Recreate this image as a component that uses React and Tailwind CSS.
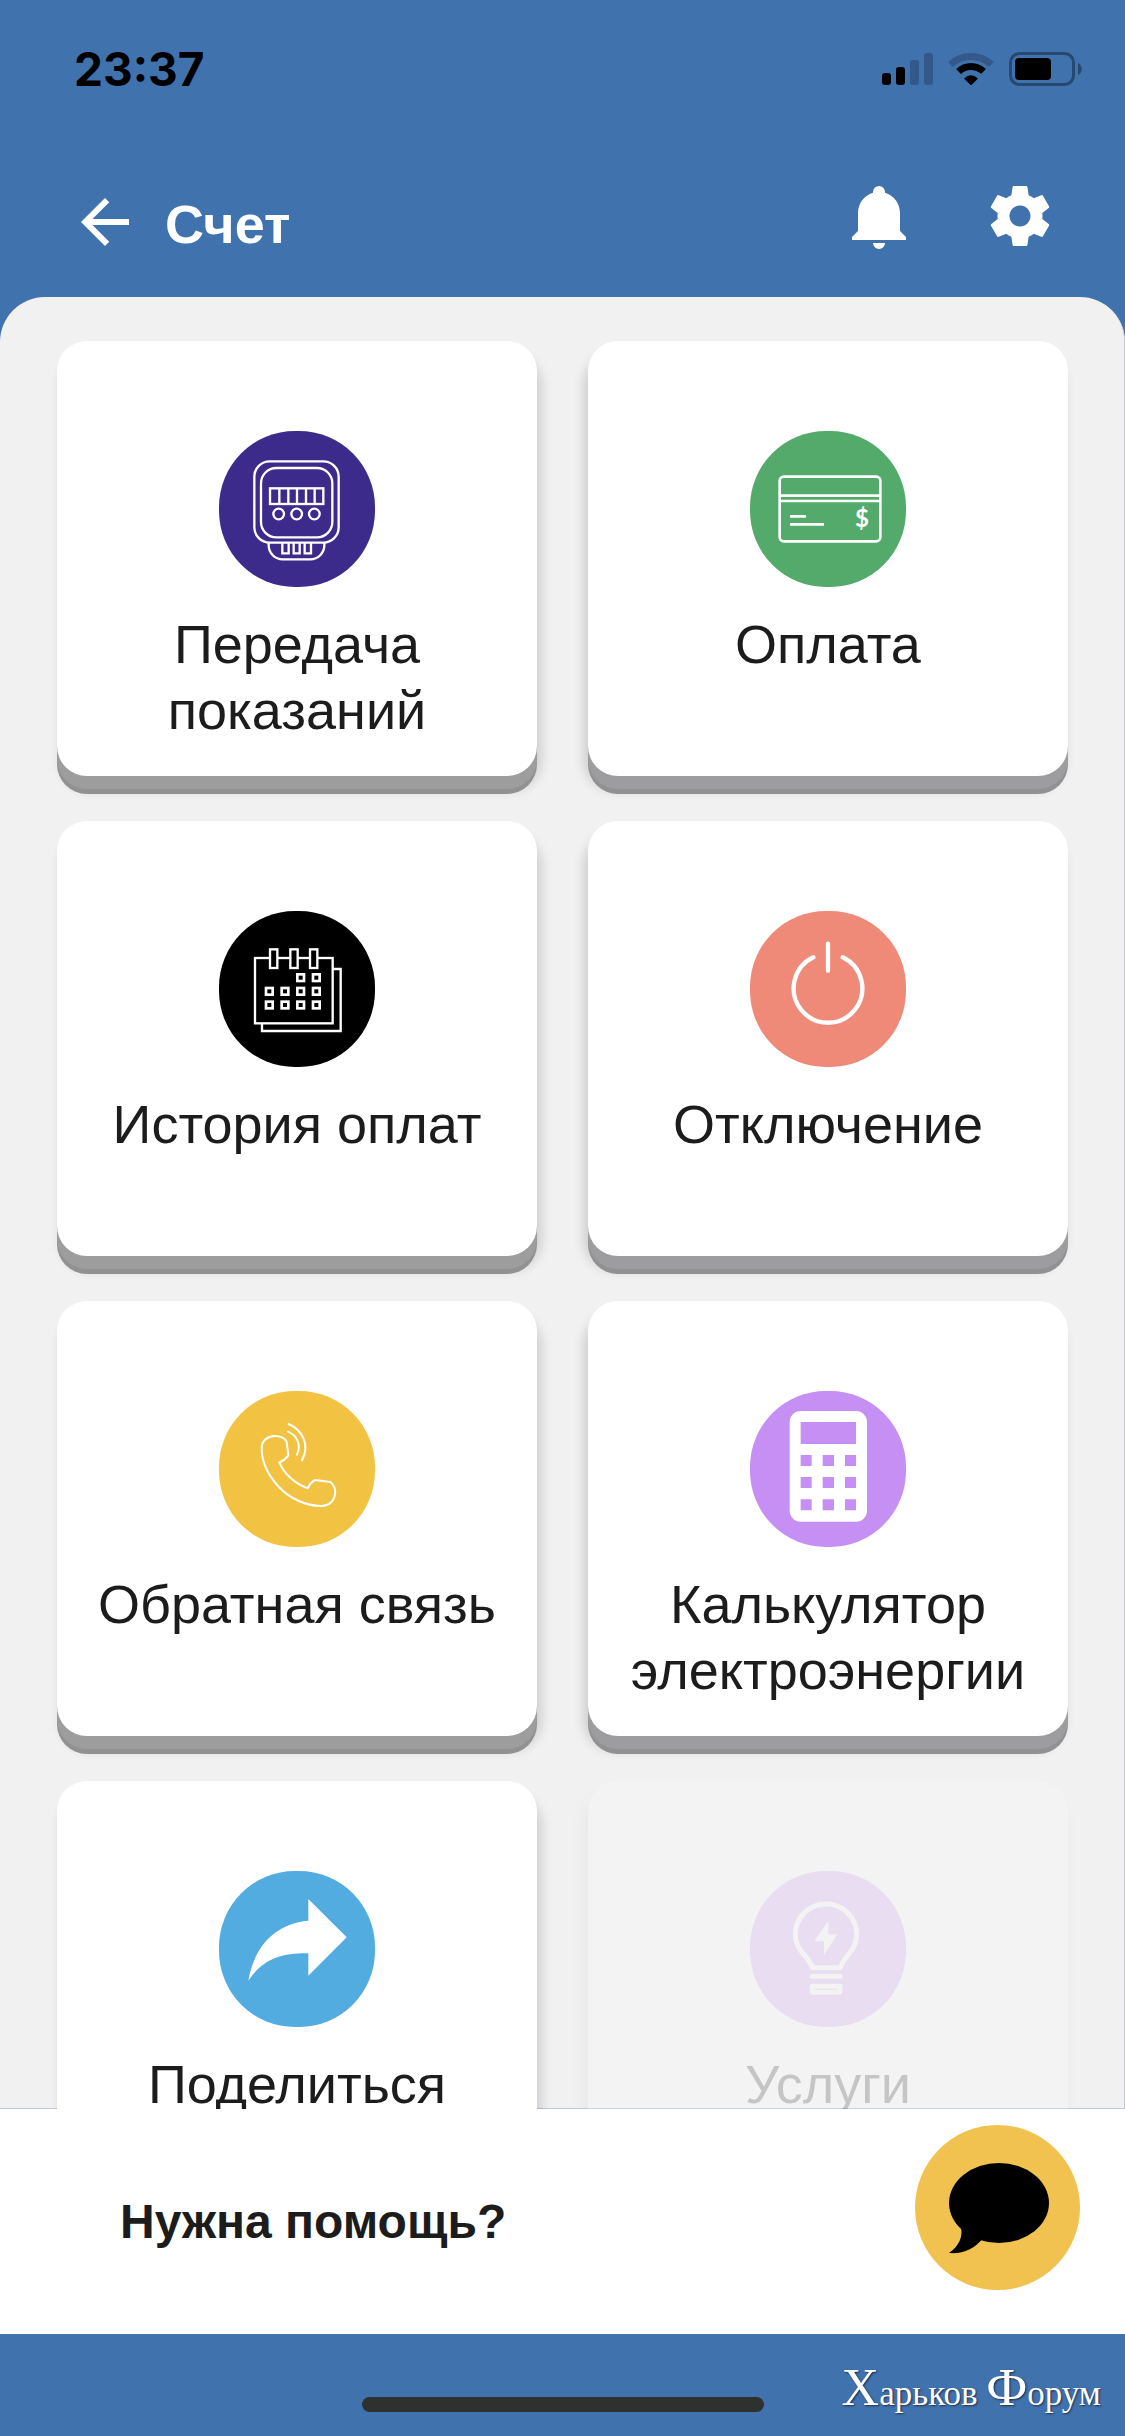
import React from "react";

function MeterIcon() {
  return (
    <svg viewBox="0 0 468 468" className="size-full" fill="none" stroke="white" strokeWidth="7" aria-hidden="true">
      <rect x="106" y="91" width="253" height="244" rx="46" />
      <rect x="126" y="111" width="214" height="208" rx="46" />
      <rect x="153" y="172" width="160" height="47" />
      <path d="M181 172v47M208 172v47M234 172v47M261 172v47M287 172v47" />
      <circle cx="179" cy="249" r="16" />
      <circle cx="233" cy="249" r="16" />
      <circle cx="286" cy="249" r="16" />
      <path d="M149 335v8a42 42 0 0 0 42 42h83a42 42 0 0 0 42-42v-8" />
      <path d="M190 335v32h19v-32M224 335v32h18v-32M257 335v32h19v-32" />
    </svg>
  );
}

function CardIcon() {
  return (
    <svg viewBox="0 0 468 468" className="size-full" fill="none" stroke="white" strokeWidth="8" aria-hidden="true">
      <rect x="89" y="137" width="302" height="194" rx="12" />
      <path d="M89 194h302M89 210h302M120 256h48M120 280h102" />
      <text x="336" y="288" textAnchor="middle" fill="white" stroke="none" fontSize="72" fontWeight="700" fontFamily="Lato, sans-serif">
        $
      </text>
    </svg>
  );
}

const days = [
  [245, 200], [292, 200],
  [151, 241], [198, 241], [245, 241], [292, 241],
  [151, 282], [198, 282], [245, 282], [292, 282],
];

function CalendarIcon() {
  return (
    <svg viewBox="0 0 468 468" className="size-full" fill="none" stroke="white" strokeWidth="7" aria-hidden="true">
      <path d="M341 174h24v186H129v-23" />
      <rect x="108" y="141" width="233" height="196" />
      <g fill="black">
        <rect x="153" y="115" width="22" height="56" />
        <rect x="214" y="115" width="22" height="56" />
        <rect x="273" y="115" width="22" height="56" />
      </g>
      {days.map(([x, y]) => (
        <rect key={`${x}-${y}`} x={x - 10} y={y - 10} width="20" height="20" strokeWidth="8" />
      ))}
    </svg>
  );
}

function PowerIcon() {
  return (
    <svg viewBox="0 0 468 468" className="size-full" fill="none" stroke="white" strokeWidth="13" strokeLinecap="round" aria-hidden="true">
      <path d="M234 98v81M190 139a103 103 0 1 0 88 0" />
    </svg>
  );
}

function PhoneIcon() {
  return (
    <svg viewBox="57 63 468 468" className="size-full" fill="none" stroke="white" strokeWidth="6" strokeLinecap="round" strokeLinejoin="round" aria-hidden="true">
      <path d="M185 236C184 214 200 200 222 198C240 197 256 204 260 216L265 256C258 266 250 272 238 277C252 312 286 342 323 355C328 344 334 335 346 330L391 336C402 345 407 360 405 373C401 395 386 407 364 408C318 408 268 386 234 348C204 314 185 274 185 236Z" />
      <path d="M266 162C305 180 332 222 306 271M264 185C288 195 306 222 291 254" />
    </svg>
  );
}

function CalculatorIcon() {
  return (
    <svg viewBox="60 63 468 468" className="size-full" fill="white" aria-hidden="true">
      <path
        fillRule="evenodd"
        d="M212 123H378a33 33 0 0 1 33 33V422a33 33 0 0 1-33 33H212a33 33 0 0 1-33-33V156a33 33 0 0 1 33-33ZM212 156v66h166v-66ZM212 255v33h33v-33ZM278 255v33h34v-33ZM345 255v33h33v-33ZM212 321v33h33v-33ZM278 321v33h34v-33ZM345 321v33h33v-33ZM212 388v33h33v-33ZM278 388v33h34v-33ZM345 388v33h33v-33Z"
      />
    </svg>
  );
}

function ShareIcon() {
  return (
    <svg viewBox="0 0 468 468" className="size-full" fill="white" aria-hidden="true">
      <path d="M268 84L383 199L268 314V247C186 246 132 264 88 329C104 234 162 158 268 149Z" />
    </svg>
  );
}

function BulbIcon() {
  return (
    <svg viewBox="0 0 468 468" className="size-full" fill="none" stroke="white" strokeWidth="15" strokeLinecap="round" strokeLinejoin="round" aria-hidden="true">
      <path d="M187 290C176 254 136 240 136 190A92 91 0 0 1 320 190C320 240 282 254 271 290Z" />
      <path d="M187 316h83M187 346h83v14q0 4-4 4h-75q-4 0-4-4Z" />
      <path d="M235 150V190H262L222 252V211H192Z" fill="white" stroke="none" />
    </svg>
  );
}

const tiles = [
  { label: "Передача показаний", color: "bg-[#3c2b8b]", Icon: MeterIcon },
  { label: "Оплата", color: "bg-[#53aa6a]", Icon: CardIcon },
  { label: "История оплат", color: "bg-black", Icon: CalendarIcon },
  { label: "Отключение", color: "bg-[#ef8a78]", Icon: PowerIcon },
  { label: "Обратная связь", color: "bg-[#f2c343]", Icon: PhoneIcon },
  { label: "Калькулятор электроэнергии", color: "bg-[#c58ff3]", Icon: CalculatorIcon },
  { label: "Поделиться", color: "bg-[#52ace0]", Icon: ShareIcon },
  { label: "Услуги", color: "bg-[#c58ff3]", Icon: BulbIcon, disabled: true },
];

function Tile({ label, color, Icon, disabled }) {
  return (
    <button
      type="button"
      disabled={disabled}
      className="flex min-h-[435px] flex-col items-center gap-6 rounded-[30px] bg-white px-4 pt-[90px] pb-[33px] odd:shadow-[0_13px_0_#9d9d9d,0_18px_0_#919191,4px_14px_12px_rgba(0,0,0,0.16)] even:shadow-[0_13px_0_#9d9d9f,0_18px_0_#919193,-4px_14px_12px_rgba(0,0,0,0.16)] disabled:opacity-20"
    >
      <span className={`size-[156px] shrink-0 rounded-[76px] ${color}`}>
        <Icon />
      </span>
      <span className="text-[54px] leading-[66px] text-[#1c1c1c]">{label}</span>
    </button>
  );
}

function StatusBar() {
  return (
    <div className="flex h-[132px] items-start justify-between pt-[42px] pr-[43px] pl-[74px]">
      <span className="font-[Inter,sans-serif] text-[46px] leading-[54px] font-bold text-black">23:37</span>
      <svg width="200" height="34" viewBox="0 0 200 34" className="mt-[10px]" aria-hidden="true">
        <rect x="0" y="21" width="9" height="12" rx="3" />
        <rect x="14" y="15" width="9" height="18" rx="3" />
        <rect x="28" y="8" width="9" height="25" rx="3" fill="#33598a" />
        <rect x="42" y="1" width="9" height="32" rx="3" fill="#33598a" />
        <g fill="none">
          <path d="M68.500 12.500A30 30 0 0 1 109.500 12.500" stroke="#33598a" strokeWidth="7" />
          <path d="M76.500 19.500A18 18 0 0 1 101.500 19.500" stroke="black" strokeWidth="7" />
        </g>
        <path d="M82 26.500Q89 20 96 26.500L90 32.500Q89 33.500 88 32.500Z" />
        <rect x="128.500" y="1.500" width="63" height="31" rx="9" fill="none" stroke="#27486f" strokeWidth="3" />
        <rect x="133" y="6" width="36" height="22" rx="4" />
        <path d="M196 11c5 2 5 10 0 12z" fill="#27486f" />
      </svg>
    </div>
  );
}

function Header() {
  return (
    <header className="flex items-start justify-between px-[69px] pt-12 pb-[39px] text-white">
      <div className="mt-1.5 flex items-center gap-6">
        <button type="button" aria-label="Назад">
          <svg viewBox="0 0 24 24" className="size-[72px]" fill="currentColor">
            <path d="M20 11H7.830l5.590-5.590L12 4l-8 8 8 8 1.410-1.410L7.830 13H20v-2z" />
          </svg>
        </button>
        <h1 className="pt-1 text-[54px] leading-[66px] font-bold">Счет</h1>
      </div>
      <div className="flex gap-[69px]">
        <button type="button" aria-label="Уведомления">
          <svg viewBox="0 0 24 24" className="size-[72px]" fill="currentColor">
            <path d="M21,19V20H3V19L5,17V11C5,7.900 7.030,5.170 10,4.290C10,4.190 10,4.100 10,4A2,2 0 0,1 12,2A2,2 0 0,1 14,4C14,4.100 14,4.190 14,4.290C16.970,5.170 19,7.900 19,11V17L21,19M14,21A2,2 0 0,1 12,23A2,2 0 0,1 10,21" />
          </svg>
        </button>
        <button type="button" aria-label="Настройки">
          <svg viewBox="0 0 24 24" className="size-[72px]" fill="currentColor">
            <path d="M19.430 12.980c.04-.32.07-.64.07-.98s-.03-.66-.07-.98l2.110-1.650c.19-.15.24-.42.12-.64l-2-3.460c-.12-.22-.39-.3-.61-.22l-2.490 1c-.52-.4-1.080-.73-1.690-.98l-.38-2.650C14.460 2.180 14.250 2 14 2h-4c-.25 0-.46.18-.49.42l-.38 2.650c-.61.25-1.170.59-1.690.98l-2.490-1c-.23-.09-.49 0-.61.22l-2 3.460c-.13.22-.07.49.12.64l2.110 1.650c-.04.32-.07.65-.07.98s.03.66.07.98l-2.110 1.650c-.19.15-.24.42-.12.64l2 3.460c.12.22.39.3.61.22l2.490-1c.52.4 1.080.73 1.690.98l.38 2.650c.03.24.24.42.49.42h4c.25 0 .46-.18.49-.42l.38-2.650c.61-.25 1.170-.59 1.690-.98l2.490 1c.23.09.49 0 .61-.22l2-3.460c.12-.22.07-.49-.12-.64l-2.110-1.650zM12 15.500c-1.930 0-3.500-1.570-3.500-3.500s1.570-3.500 3.500-3.500 3.500 1.570 3.500 3.500-1.570 3.500-3.500 3.500z" />
          </svg>
        </button>
      </div>
    </header>
  );
}

export default function App() {
  return (
    <div className="flex h-screen flex-col bg-[#4072ae] font-['Liberation_Sans',Arial,sans-serif]">
      <StatusBar />
      <Header />
      <main className="min-h-0 flex-1 overflow-x-hidden overflow-y-auto rounded-t-[45px] bg-[#f1f1f1] shadow-[inset_-1px_-1px_0_#c0c8da] [scrollbar-width:none]">
        <div className="grid grid-cols-2 gap-x-[51px] gap-y-[45px] px-[57px] pt-11 pb-12">
          {tiles.map((tile) => (
            <Tile key={tile.label} {...tile} />
          ))}
        </div>
      </main>
      <section className="flex min-h-[225px] items-center justify-between bg-white pr-[45px] pl-[120px]">
        <p className="text-[48px] leading-[56px] font-bold text-[#1c1c1c]">Нужна помощь?</p>
        <button type="button" aria-label="Открыть чат" className="mt-4 size-[165px] self-start rounded-full bg-[#f1c250]">
          <svg viewBox="0 0 165 165" className="size-full" aria-hidden="true">
            <ellipse cx="84" cy="78" rx="50" ry="40" />
            <path d="M46 102C48 112 44 121 34 128C48 129 60 124 68 113Z" />
          </svg>
        </button>
      </section>
      <footer className="grid min-h-[102px] grid-cols-[1fr_402px_1fr] items-end bg-[#4072ae] px-6">
        <span />
        <span className="mb-6 h-[15px] rounded-full bg-[#2f312f]" />
        <p className="mb-3 text-right font-['Liberation_Serif',serif] text-[35px] leading-[60px] whitespace-nowrap text-white [text-shadow:1px_1px_2px_#1f2f4a]">
          <span className="text-[52px]">Х</span>арьков <span className="text-[52px]">Ф</span>орум
        </p>
      </footer>
    </div>
  );
}
